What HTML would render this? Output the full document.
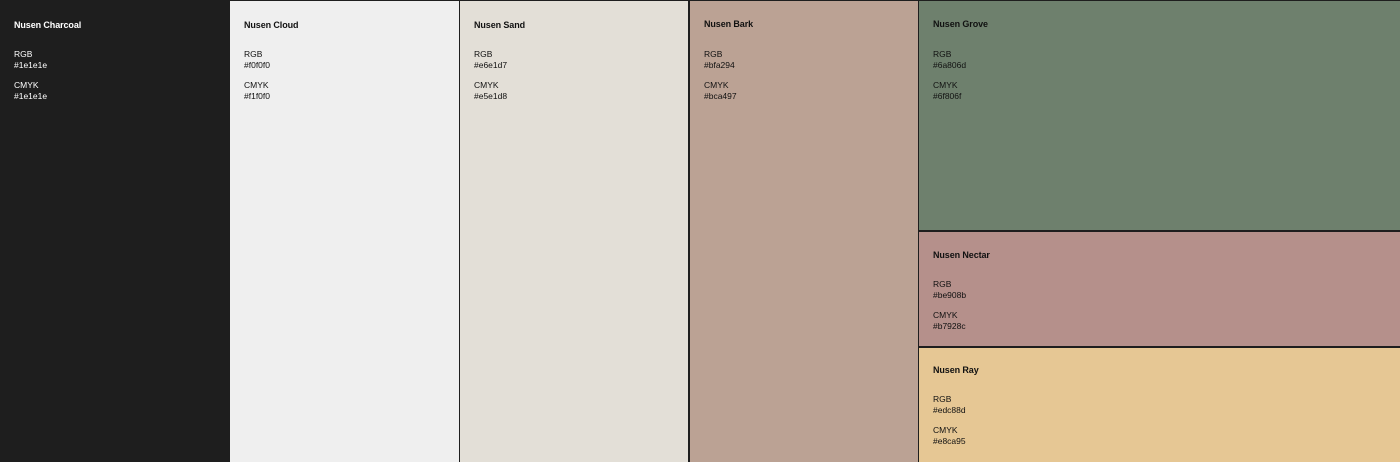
<!DOCTYPE html>
<html><head><style>
*{margin:0;padding:0;box-sizing:border-box}
body{width:1400px;height:462px;background:#1e1e1e;position:relative;overflow:hidden;font-family:"Liberation Sans",sans-serif;color:#111}
.p{position:absolute}
.t{position:absolute;left:14px;font-size:9px;font-weight:bold;letter-spacing:-0.1px}
.l{position:absolute;left:14px;font-size:8.5px;line-height:11px}
</style></head><body>
<div class="p" style="left:0;top:1px;width:230px;height:461px;background:#1e1e1e;color:#fff">
<div class="t" style="top:19px">Nusen Charcoal</div>
<div class="l" style="top:48px">RGB<br>#1e1e1e</div>
<div class="l" style="top:79px">CMYK<br>#1e1e1e</div></div>
<div class="p" style="left:230px;top:1px;width:229px;height:461px;background:#efefef">
<div class="t" style="top:19px">Nusen Cloud</div>
<div class="l" style="top:48px">RGB<br>#f0f0f0</div>
<div class="l" style="top:79px">CMYK<br>#f1f0f0</div></div>
<div class="p" style="left:460px;top:1px;width:228px;height:461px;background:#e3dfd7">
<div class="t" style="top:19px">Nusen Sand</div>
<div class="l" style="top:48px">RGB<br>#e6e1d7</div>
<div class="l" style="top:79px">CMYK<br>#e5e1d8</div></div>
<div class="p" style="left:690px;top:1px;width:228px;height:461px;background:#bba294">
<div class="t" style="top:18px">Nusen Bark</div>
<div class="l" style="top:48px">RGB<br>#bfa294</div>
<div class="l" style="top:79px">CMYK<br>#bca497</div></div>
<div class="p" style="left:919px;top:1px;width:481px;height:229px;background:#6e806d">
<div class="t" style="top:18px">Nusen Grove</div>
<div class="l" style="top:48px">RGB<br>#6a806d</div>
<div class="l" style="top:79px">CMYK<br>#6f806f</div></div>
<div class="p" style="left:919px;top:232px;width:481px;height:114px;background:#b5908b">
<div class="t" style="top:18px">Nusen Nectar</div>
<div class="l" style="top:47px">RGB<br>#be908b</div>
<div class="l" style="top:78px">CMYK<br>#b7928c</div></div>
<div class="p" style="left:919px;top:348px;width:481px;height:114px;background:#e6c794">
<div class="t" style="top:17px">Nusen Ray</div>
<div class="l" style="top:46px">RGB<br>#edc88d</div>
<div class="l" style="top:77px">CMYK<br>#e8ca95</div></div>
</body></html>
